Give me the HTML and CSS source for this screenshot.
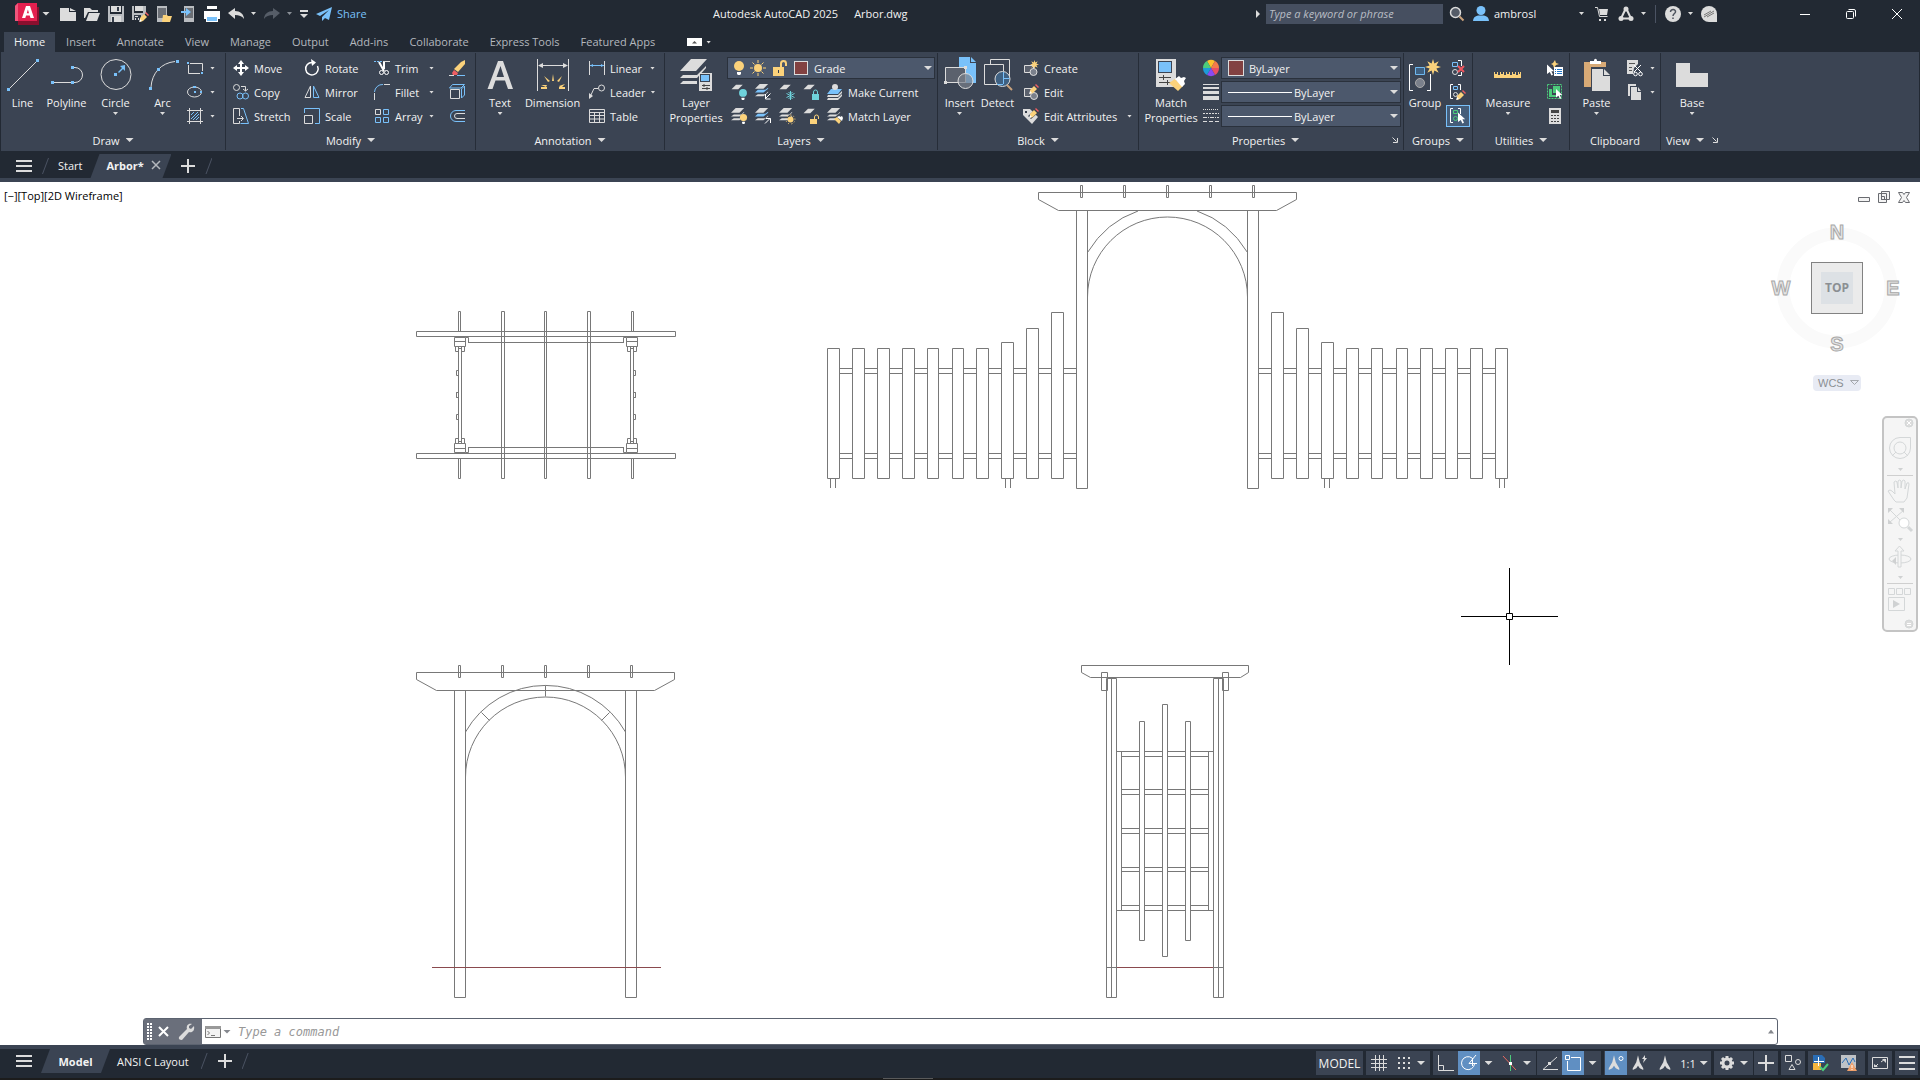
FILE: index.html
```
<!DOCTYPE html>
<html lang="en">
  <head>
    <meta charset="UTF-8" />
    <meta name="viewport" content="width=device-width, initial-scale=1.0" />
    <title>Autodesk AutoCAD 2025 - Arbor.dwg</title>
    <link rel="stylesheet" href="styles.css" />
  </head>

  <body>
    <!-- shapes used more than once -->
    <svg class="defs" aria-hidden="true">
      <symbol id="sheet" viewBox="0 0 16 16">
        <path class="fl" d="M6 1h9l-6 6H0z" />
      </symbol>
      <symbol id="sheets" viewBox="0 0 16 16">
        <path class="fl" d="M5 0h9L9 5H0zM3 7h8l3-3v1L9 9H0zM3 11h8l3-3v1l-5 4H0z" />
      </symbol>
      <symbol id="sheets-blue" viewBox="0 0 16 16">
        <path class="fl" d="M5 0h9L9 5H0zM3 11h8l3-3v1l-5 4H0z" />
        <path class="fb" d="M3 6h8l3-2v1L9 9H0z" />
      </symbol>
      <symbol id="bulb" viewBox="0 0 10 14">
        <circle cx="5" cy="5" r="5" />
        <path class="fw" d="M3 11h4v2l-1 1H4l-1-1z" />
      </symbol>
      <symbol id="star" viewBox="0 0 16 16">
        <path class="fy" d="M8 0l1.400 4.600L13.700 2.300 11.400 6.600 16 8l-4.600 1.400 2.300 4.300-4.300-2.300L8 16l-1.400-4.600-4.300 2.300 2.300-4.300L0 8l4.600-1.400-2.300-4.300 4.300 2.300z" />
      </symbol>
      <symbol id="pencil" viewBox="0 0 10 10">
        <path class="fy" d="M1 6l4-4 3 3-4 4-3 1z" />
        <path class="fr" d="M6 1l1-1 3 3-1 1z" />
        <path class="fw" d="M0 10l1-3 2 2z" />
      </symbol>
      <symbol id="pointer" viewBox="0 0 10 14">
        <path class="fw" d="M0 0l9 8.500H5.500l2 4.500-2 1-2-4.500L0 12z" />
      </symbol>
      <symbol id="menu" viewBox="0 0 16 12">
        <path class="fl" d="M0 0h16v2H0zM0 5h16v2H0zM0 10h16v2H0z" />
      </symbol>
      <symbol id="plus" viewBox="0 0 14 14">
        <path class="fl" d="M6 0h2v6h6v2H8v6H6V8H0V6h6z" />
      </symbol>
      <symbol id="launcher" viewBox="0 0 6 6">
        <path class="sl" d="M.5.5l4 4M5.500 1v4.500H1" />
      </symbol>
      <symbol id="annot" viewBox="0 0 16 18">
        <path class="fl" d="M8 0l2 8 4 7v2l-4-2-2-3-2 3-4 2v-2l4-7z" />
      </symbol>
    </svg>

    <header class="titlebar">
      <div class="quick-access">
        <button class="app-button" aria-label="Application menu">
          <svg width="24" height="22" viewBox="0 0 24 22">
            <path fill="#8a0f2e" d="M3 4h21v18H3z" />
            <path fill="#e3204f" d="M3 0h19v18H0V3z" />
            <path fill="#f0567c" d="M3 0v18H0V3z" />
            <path class="fw" d="M11 3h4l4 12h-3.500l-.8-2.600h-3.600L10.300 15H7zm1.900 3.500l-1.100 3.700h2.200z" />
          </svg>
          <i class="caret wide"></i>
        </button>
        <button aria-label="New"><svg class="ico" viewBox="0 0 16 16"><path class="fl" d="M0 2h9v4h7v9H0zM10 2l6 3h-6z" /></svg></button>
        <button aria-label="Open"><svg class="ico" viewBox="0 0 16 16"><path class="fl" d="M0 2h6l2 2h6v2H4l-3 6H0z" /><path class="fl" d="M5 7h11l-3 8H2z" /></svg></button>
        <button aria-label="Save"><svg class="ico" viewBox="0 0 16 16"><path fill="#b9bcc0" d="M0 0h2v8h12V0h2v16H0z" /><path class="fl" d="M3 0h10v6H3zM3 10h10v6H3z" /><path class="fd" d="M4 11h2v5H4zM9 1h2v4H9z" /></svg></button>
        <button aria-label="Save as"><svg class="ico" viewBox="0 0 16 16"><path fill="#b9bcc0" d="M0 0h2v7h9V0h3v7l-6 7H0z" /><path class="fl" d="M3 0h8v5H3z" /><path class="fd" d="M2 9h7v5H2z" /><path class="fl" d="M3 10h3v1H3zM3 12h1v2H3zM6 12h1v2H6z" /><use href="#pencil" x="7" y="6" width="10" height="10" /></svg></button>
        <button aria-label="Open from mobile"><svg class="ico" viewBox="0 0 16 16"><path fill="#b9bcc0" d="M1 0h10v16H1z" /><path fill="#6b6f76" d="M2 2h8v10H2z" /><path class="fy" d="M7 9h4l1 1h4l-2 6H6z" /></svg></button>
        <button aria-label="Save to mobile"><svg class="ico" viewBox="0 0 16 16"><path fill="#b9bcc0" d="M4 0h10v16H4z" /><path fill="#6b6f76" d="M5 2h8v10H5z" /><path class="fb" d="M1 5h5V2l5 4-5 4V7H1z" /></svg></button>
        <button aria-label="Plot"><svg class="ico" viewBox="0 0 16 16"><path class="fw" d="M3 0h10v3H3zM0 5h16v8h-2v-3H2v3H0z" /><path class="fw" d="M2 10h12v6H2z" /><path class="fb" d="M3 11h10v4H3z" /></svg></button>
        <button class="split" aria-label="Undo"><svg class="ico" viewBox="0 0 16 16"><path class="fl" d="M0 7l7-5v3c5 0 9 3 9 8-2-3-5-4-9-4v4z" /></svg><i class="caret"></i></button>
        <button class="split off" aria-label="Redo"><svg class="ico" viewBox="0 0 16 16"><path fill="#565d68" d="M16 7L9 2v3c-5 0-9 3-9 8 2-3 5-4 9-4v4z" /></svg><i class="caret"></i></button>
        <button class="customize" aria-label="Customize"><svg width="8" height="8" viewBox="0 0 8 8"><path class="fl" d="M0 0h8v2H0zM0 4h8L4 8z" /></svg></button>
        <button class="share"><svg width="16" height="14" viewBox="0 0 16 14"><path class="fb" d="M16 0L0 7l4 2 9-6-7 7v4l3-3 4 2z" /></svg>Share</button>
      </div>
      <div class="title"><span>Autodesk AutoCAD 2025</span><span>Arbor.dwg</span></div>
      <div class="infocenter">
        <svg width="4" height="8" viewBox="0 0 4 8"><path class="fl" d="M0 0l4 4-4 4z" /></svg>
        <input class="search" type="text" placeholder="Type a keyword or phrase" aria-label="Search" />
        <button aria-label="Find"><svg class="ico" viewBox="0 0 16 16"><circle cx="6.500" cy="6.500" r="5" fill="#555c68" stroke="#dcdcdc" stroke-width="1.500" /><path d="M10.500 10.500l4 4" stroke="#c9a27c" stroke-width="2" /></svg></button>
        <button class="user"><svg class="ico" viewBox="0 0 16 16"><circle class="fb" cx="8" cy="4.500" r="4.500" /><path class="fb" d="M0 15c0-3 2-5 5-5.500h6c3 .5 5 2.500 5 5.500z" /></svg>ambrosl<i class="caret"></i></button>
        <button class="cart" aria-label="App store"><svg class="ico" viewBox="0 0 16 16"><path class="sl" d="M1 1.500h2.500l2 9h8" /><path class="fl" d="M5 3h9l-1 6H6zM5 13h2v2H5zM10 13h2v2h-2z" /></svg></button>
        <button class="split" aria-label="Autodesk app"><svg class="ico" viewBox="0 0 16 16"><path d="M8 2L3 12.500M8 2l5 10.500M3 12.500h10" stroke="#dcdcdc" stroke-width="2" fill="none" /><circle class="fl" cx="8" cy="3" r="2.500" /><circle class="fl" cx="3" cy="12.500" r="2.500" /><circle class="fl" cx="13" cy="12.500" r="2.500" /></svg><i class="caret"></i></button>
        <span class="divider"></span>
        <button class="split" aria-label="Help"><svg class="ico" viewBox="0 0 16 16"><circle class="fl" cx="8" cy="8" r="8" /><path d="M5.500 6C5.500 2.500 11 3 10.500 6 10.300 7.500 8 7.800 8 10M8 11.500v1.500" fill="none" stroke="#4d535d" stroke-width="1.500" /></svg><i class="caret"></i></button>
        <button class="feedback" aria-label="Feedback"><svg class="ico" viewBox="0 0 16 16"><path class="fl" d="M8 0a8 8 0 0 1 8 8v8H8A8 8 0 0 1 8 0z" /><path d="M3 9l7-4M3 11l10-6M6 11l7-4" stroke="#777" fill="none" /></svg></button>
      </div>
      <div class="window-buttons">
        <button aria-label="Minimize"><svg width="10" height="10" viewBox="0 0 10 10"><path class="sw" d="M0 5.500h10" /></svg></button>
        <button aria-label="Restore"><svg width="10" height="10" viewBox="0 0 10 10"><rect class="sw" x=".5" y="2.500" width="7" height="7" rx="1" /><path class="sw" d="M2.500.5H8A1.500 1.500 0 0 1 9.500 2v5.500" /></svg></button>
        <button aria-label="Close"><svg width="10" height="10" viewBox="0 0 10 10"><path class="sw" d="M0 0l10 10M10 0L0 10" /></svg></button>
      </div>
    </header>

    <nav class="ribbon-tabs">
      <a class="active" href="#home">Home</a>
      <a href="#insert">Insert</a>
      <a href="#annotate">Annotate</a>
      <a href="#view">View</a>
      <a href="#manage">Manage</a>
      <a href="#output">Output</a>
      <a href="#addins">Add-ins</a>
      <a href="#collaborate">Collaborate</a>
      <a href="#express">Express Tools</a>
      <a href="#featured">Featured Apps</a>
      <button aria-label="Minimize ribbon"><svg width="15" height="8" viewBox="0 0 15 8"><path class="fw" d="M0 0h15v8H0z" /><path fill="#555" d="M5 5.500L7.500 3 10 5.500z" /></svg><i class="caret"></i></button>
    </nav>

    <main class="ribbon" id="home">
      <section class="panel draw">
        <div class="panel-body">
          <button class="big"><svg viewBox="0 0 32 32"><path class="sl" d="M2 30L30 2" /><path class="fb" d="M0 29h3v3H0zM29 0h3v3h-3z" /></svg>Line</button>
          <button class="big"><svg viewBox="0 0 32 32"><path class="sl" d="M2 23.500h20M22 8.500h2a7.500 7.500 0 0 1 0 15h-2" /><path class="fb" d="M0 22h3v3H0zM20 22h3v3h-3zM20 7h3v3h-3z" /></svg>Polyline</button>
          <button class="big"><svg viewBox="0 0 32 32"><circle class="sl" cx="16" cy="15.500" r="15" /><path class="fb" d="M14 14h3v3h-3zM25 6v6l-2-2-4 4-1-1 4-4-2-2z" /></svg>Circle<i class="caret"></i></button>
          <button class="big"><svg viewBox="0 0 32 32"><path class="sl" d="M4 28C5 14 14 4 28 2.500" /><path class="fb" d="M2 28h3v3H2zM10 9h3v3h-3zM29 1h3v3h-3z" /></svg>Arc<i class="caret"></i></button>
          <div class="stack">
            <button class="tool" aria-label="Rectangle"><svg class="ico" viewBox="0 0 16 16"><path class="sl" d="M3 3.500h12.500V11M1.500 5v8.500H13" /><path class="fb" d="M0 2h2v2H0zM14 12h2v2h-2z" /></svg><i class="caret"></i></button>
            <button class="tool" aria-label="Ellipse"><svg class="ico" viewBox="0 0 16 16"><ellipse class="sl" cx="7.500" cy="8" rx="7" ry="5" /><path class="fb" d="M7 7h2v2H7zM6 2h3v2H6zM13 7h2v2h-2z" /></svg><i class="caret"></i></button>
            <button class="tool" aria-label="Hatch"><svg class="ico" viewBox="0 0 16 16"><path class="sl" d="M0 2.500h16M0 13.500h16M2.500 0v16M13.500 0v16" /><path class="sb" d="M4 7l3-3M4 11l7-7M6 12l6-6M9 12l3-3" /></svg><i class="caret"></i></button>
          </div>
        </div>
        <div class="panel-title"><button>Draw<i class="caret wide"></i></button></div>
      </section>

      <section class="panel modify">
        <div class="panel-body">
          <div class="stack">
            <button class="tool"><svg class="ico" viewBox="0 0 16 16"><path class="fw" d="M8 0l3 4H9v3h3V5l4 3-4 3V9H9v3h2l-3 4-3-4h2V9H4v2L0 8l4-3v2h3V4H5z" /></svg>Move</button>
            <button class="tool"><svg class="ico" viewBox="0 0 16 16"><circle class="sl" cx="3.500" cy="3.500" r="3" /><path class="sl" d="M8 2.500h4.500V7M10 5l2.500 2L15 5" /><circle class="sb" cx="7" cy="12" r="3" /><circle class="sb" cx="12.500" cy="12" r="3" /></svg>Copy</button>
            <button class="tool"><svg class="ico" viewBox="0 0 16 16"><path class="sl" d="M6.500 8V.5h-6v15h6V13M4 10.500h6M8 8l2.500 2.500L8 13" /><path class="sb" d="M8 .5h2.500l5 15H7.500" /></svg>Stretch</button>
          </div>
          <div class="stack">
            <button class="tool"><svg class="ico" viewBox="0 0 16 16"><path d="M8 2.500A6.200 6.200 0 1 0 13.500 6" fill="none" stroke="#fff" stroke-width="1.500" /><path class="fw" d="M7-1l5 3.500L8 6z" /></svg>Rotate</button>
            <button class="tool"><svg class="ico" viewBox="0 0 16 16"><path class="sl" d="M6.500 2v11.500H1z" /><path class="sb" d="M9.500 2v11.500H15z" /></svg>Mirror</button>
            <button class="tool"><svg class="ico" viewBox="0 0 16 16"><path class="sb" d="M.5 5V.5h15v15H11" /><path class="sl" d="M.5 7.500h8v8h-8z" /></svg>Scale</button>
          </div>
          <div class="stack">
            <button class="tool"><svg class="ico" viewBox="0 0 16 16"><path class="sb" stroke-dasharray="2 1" d="M0 1.500h8" /><path class="sl" d="M9 1.500h7" /><path d="M5 2l5 9M10 2v7" stroke="#fff" stroke-width="2" /><circle class="sw" cx="7.500" cy="12.500" r="2" /><circle class="sw" cx="12.500" cy="12.500" r="2" /></svg>Trim<i class="caret"></i></button>
            <button class="tool"><svg class="ico" viewBox="0 0 16 16"><path class="sb" d="M.5 8A8 8 0 0 1 9 .5" /><path class="sl" d="M.5 9v7M10 .5h6" /></svg>Fillet<i class="caret"></i></button>
            <button class="tool"><svg class="ico" viewBox="0 0 16 16"><path class="sl" d="M1.500 1.500h5v5h-5z" /><path class="sb" d="M9.500 1.500h5v5h-5zM1.500 9.500h5v5h-5zM9.500 9.500h5v5h-5z" /></svg>Array<i class="caret"></i></button>
          </div>
          <div class="stack extra">
            <button class="tool" aria-label="Erase"><svg class="ico" viewBox="0 0 16 16"><path class="fy" d="M12 2l4-2v4l-7 8-4-3z" /><path class="fr" d="M5 10l4 3-1 2H4l-1-2z" /><path class="sl" d="M0 15.500h5" /><path class="sb" d="M8 15.500h8" /></svg></button>
            <button class="tool" aria-label="Explode"><svg class="ico" viewBox="0 0 16 16"><path class="sl" d="M1.500 5.500h9v9h-9z" /><path class="sb" d="M.5 4l3-3.500h12L12 4zM12.500 14l3-3V2l-3 3z" /></svg></button>
            <button class="tool" aria-label="Offset"><svg class="ico" viewBox="0 0 16 16"><path class="sb" d="M16 2.500H7a5.500 5.500 0 0 0 0 11h9" /><path class="sl" d="M16 5.500H8a2.500 2.500 0 0 0 0 5h8" /></svg></button>
          </div>
        </div>
        <div class="panel-title"><button>Modify<i class="caret wide"></i></button></div>
      </section>

      <section class="panel annotation">
        <div class="panel-body">
          <button class="big"><svg viewBox="0 0 32 32"><path class="fl" d="M14 2h5l10 28h-5l-3-8.500H11.500L8.500 30H3.500zm2.500 5l-4 11h7.500z" /></svg>Text<i class="caret"></i></button>
          <button class="big"><svg viewBox="0 0 32 32"><path class="sl" d="M.5 0v32M31.500 0v32M2 6.500h28" /><path class="fl" d="M1 6.500L6 4v5zM31 6.500L26 4v5z" /><path class="fy" d="M15 22l1-7 1 7zM11 23l-4-6 6 5zM20 22l5-5-3 6zM9 28l-5-2 6 0zM22 27l6-2-4 4zM4 28h6v2H4zM22 28h6v2h-6z" /></svg>Dimension</button>
          <div class="stack">
            <button class="tool"><svg class="ico" viewBox="0 0 16 16"><path class="sl" d="M.5 1v14M15.500 1v14" /><path class="sb" d="M1 5.500h14" /><path class="fb" d="M1 5.500L4 4v3zM15 5.500L12 4v3z" /></svg>Linear<i class="caret"></i></button>
            <button class="tool"><svg class="ico" viewBox="0 0 16 16"><circle class="sl" cx="12.500" cy="4" r="3" /><path class="sl" d="M9 4.500H5L1 13" /><path class="fl" d="M0 15V9l4 3z" /></svg>Leader<i class="caret"></i></button>
            <button class="tool"><svg class="ico" viewBox="0 0 16 16"><path class="sl" d="M.5 1.500h15v13H.5zM0 4.500h16M0 7.500h16M0 11h16M5.500 4v10M10.500 4v10" /></svg>Table</button>
          </div>
        </div>
        <div class="panel-title"><button>Annotation<i class="caret wide"></i></button></div>
      </section>

      <section class="panel layers">
        <div class="panel-body">
          <button class="big"><svg viewBox="0 0 32 32"><path class="fl" d="M11 0h16L16 12H0zM3 16h14l9-9v2l-9 10H0zM3 22h14v3H0z" /><path class="fl" d="M19 14h13v18H19z" /><path fill="#3b4453" d="M20 15h10v8H20z" /><path class="fb" d="M21 16h8v6h-8z" /><path d="M22 26.500h8M22 29.500h8M24 25v3M27 28v3" stroke="#444" /></svg>Layer<br />Properties</button>
          <div class="stack">
            <label class="combo">
              <svg width="10" height="14" class="fy"><use href="#bulb" /></svg>
              <svg class="ico" viewBox="0 0 16 16"><circle class="fy" cx="8" cy="8" r="4" /><path class="sy" d="M8 0v3M8 13v3M0 8h3M13 8h3M2.500 2.500l2 2M11.500 11.500l2 2M2.500 13.500l2-2M11.500 4.500l2-2" /></svg>
              <svg class="ico" viewBox="0 0 16 16"><path d="M9 7V3.500a2.500 2.500 0 0 1 5 0V6" fill="none" stroke="#fbd27b" stroke-width="2" /><path class="fy" d="M1 7h11v9H1z" /><path class="fd" d="M6 10h1v3H6z" /></svg>
              <span class="swatch"></span>
              <select aria-label="Layer"><option>Grade</option></select>
              <i class="caret wide"></i>
            </label>
            <div class="row">
              <button class="tool" aria-label="Off"><svg class="ico" viewBox="0 0 16 16"><use href="#sheet" y="0" width="13" height="12" /><use class="fc" href="#bulb" x="8" y="5" width="8" height="11" /></svg></button>
              <button class="tool" aria-label="Isolate"><svg class="ico" viewBox="0 0 16 16"><use href="#sheets-blue" width="15" height="15" /><path class="sw" d="M15.500 9.500l-5 5M10.500 10v5h5" /></svg></button>
              <button class="tool" aria-label="Freeze"><svg class="ico" viewBox="0 0 16 16"><use href="#sheet" width="13" height="12" /><path d="M11.500 7v9M7.500 9.500l8 4M15.500 9.500l-8 4M9.500 8l2 2 2-2M9.500 15l2-2 2 2" stroke="#6fd3dc" fill="none" /></svg></button>
              <button class="tool" aria-label="Lock"><svg class="ico" viewBox="0 0 16 16"><use href="#sheet" width="13" height="12" /><path class="fc" d="M9 10h7v6H9z" /><path d="M10.500 10V8a2 2 0 0 1 4 0v2" stroke="#6fd3dc" fill="none" /></svg></button>
              <button class="tool"><svg class="ico" viewBox="0 0 16 16"><path class="fb" d="M4 5h11l-4 5H0z" /><path class="fl" d="M1 11h10l4-4v2l-4 4H0zM1 14h10l4-4v2l-4 4H0z" /><circle class="fl" cx="8" cy="3" r="3" /></svg>Make Current</button>
            </div>
            <div class="row">
              <button class="tool" aria-label="Turn all on"><svg class="ico" viewBox="0 0 16 16"><use href="#sheets" width="15" height="15" /><use class="fy" href="#bulb" x="8" y="6" width="9" height="10" /></svg></button>
              <button class="tool" aria-label="Unisolate"><svg class="ico" viewBox="0 0 16 16"><use href="#sheets-blue" width="15" height="15" /><path class="sw" d="M10 15.500l5-5M11 10.500h4.500V15" /></svg></button>
              <button class="tool" aria-label="Thaw all"><svg class="ico" viewBox="0 0 16 16"><use href="#sheets" width="15" height="15" /><circle class="fy" cx="11.500" cy="11.500" r="3" /><path class="sy" stroke-dasharray="1 2" d="M11.500 7a4.500 4.500 0 1 1-.1 0" /></svg></button>
              <button class="tool" aria-label="Unlock"><svg class="ico" viewBox="0 0 16 16"><use href="#sheet" width="13" height="12" /><path class="fy" d="M7 11h7v5H7z" /><path class="sy" d="M11.500 11V9a2 2 0 0 1 4 0v2" /></svg></button>
              <button class="tool"><svg class="ico" viewBox="0 0 16 16"><use href="#sheets" width="15" height="15" /><path class="fy" d="M7 11l3-2 4 4-2 3z" /><path class="fw" d="M10 9l2-1 1 1 2-1 1 2-1 3z" /></svg>Match Layer</button>
            </div>
          </div>
        </div>
        <div class="panel-title"><button>Layers<i class="caret wide"></i></button></div>
      </section>

      <section class="panel block">
        <div class="panel-body">
          <button class="big"><svg viewBox="0 0 32 32"><path class="fb" d="M15-2h11v6h6v20H15z" /><path class="fb" d="M27-2l5 5h-5z" /><path d="M1.500 8.500h20v15h-20z" fill="#5b616d" stroke="#dcdcdc" /><path class="fl" d="M0 22h3v3H0zM20 7h3v3h-3z" /><circle cx="21.500" cy="22" r="7.500" fill="#7a808b" fill-opacity=".7" stroke="#dcdcdc" /></svg>Insert<i class="caret"></i></button>
          <button class="big"><svg viewBox="0 0 32 32"><path d="M8.500 5V.5h19V20" class="sl" /><path class="sl" d="M16 25.500H2.500v-20h19V12" /><circle cx="20.500" cy="20" r="7.500" fill="#3f6182" stroke="#dcdcdc" /><path class="sb" d="M21.500 13v12M21.500 19.500h6M15 25.500h6" /><path d="M25 26l5 5" stroke="#c9a27c" stroke-width="2" /></svg>Detect</button>
          <div class="stack">
            <button class="tool"><svg class="ico" viewBox="0 0 16 16"><path d="M1.500 5.500h9v7h-9z" fill="#5b616d" stroke="#dcdcdc" /><circle cx="10.500" cy="12" r="3.500" fill="#7a808b" stroke="#dcdcdc" /><use href="#star" x="7" y="0" width="9" height="9" /></svg>Create</button>
            <button class="tool"><svg class="ico" viewBox="0 0 16 16"><path d="M1.500 4.500h9v8h-9z" fill="#5b616d" stroke="#dcdcdc" /><circle cx="11" cy="12" r="3.500" fill="#7a808b" stroke="#dcdcdc" /><use href="#pencil" x="6" y="0" width="10" height="10" /></svg>Edit</button>
            <button class="tool"><svg class="ico" viewBox="0 0 16 16"><path class="fl" d="M0 1h7l8 8-6 7-9-9z" /><path class="fd" d="M2 3h2v2H2z" /><path class="fd" d="M5 8l9-8 2 4-8 7z" /><use href="#pencil" x="6" y="0" width="10" height="10" /></svg>Edit Attributes<i class="caret"></i></button>
          </div>
        </div>
        <div class="panel-title"><button>Block<i class="caret wide"></i></button></div>
      </section>

      <section class="panel properties">
        <div class="panel-body">
          <button class="big"><svg viewBox="0 0 32 32"><path class="fl" d="M1 0h20v28H1z" /><path fill="#3b4453" d="M3 2h14v12H3z" /><path class="fb" d="M4 3h12v10H4z" /><path d="M4 18.500h12M4 23.500h12M8.500 16v5M12.500 21v5" stroke="#444" fill="none" /><path class="fy" d="M14 24l6-4 8 7-5 5z" /><path class="fw" d="M20 20l4-3 2 2 3-1 2 1-2 3 1 3-3 3z" /></svg>Match<br />Properties</button>
          <div class="prop-grid">
            <svg class="ico wheel" viewBox="0 0 16 16"><path fill="#fbc02d" d="M8 8L4 1a8 8 0 0 1 8 0z" /><path fill="#f37b4b" d="M8 8l4-7a8 8 0 0 1 4 7z" /><path fill="#e94f64" d="M8 8h8a8 8 0 0 1-4 7z" /><path fill="#8a4af3" d="M8 8l4 7a8 8 0 0 1-8 0z" /><path fill="#1e9bd7" d="M8 8l-4 7a8 8 0 0 1-4-7z" /><path fill="#4ccb7b" d="M8 8H0a8 8 0 0 1 4-7z" /></svg>
            <label class="combo color"><span class="swatch"></span><select aria-label="Object color"><option>ByLayer</option></select><i class="caret wide"></i></label>
            <svg class="ico" viewBox="0 0 16 16"><path class="fl" d="M0 0h16v1H0zM0 3h16v2H0zM0 7h16v3H0zM0 12h16v4H0z" /></svg>
            <label class="combo line"><span class="rule"></span><select aria-label="Lineweight"><option>ByLayer</option></select><i class="caret wide"></i></label>
            <svg class="ico" viewBox="0 0 16 16"><path class="sl" stroke-dasharray="1 1" d="M0 1.500h16" /><path class="sl" stroke-dasharray="2 1" d="M0 5.500h16" /><path class="sl" stroke-dasharray="4 1 1 1" d="M0 9.500h16" /><path class="sl" stroke-dasharray="4 2" d="M0 13.500h16" /></svg>
            <label class="combo line"><span class="rule"></span><select aria-label="Linetype"><option>ByLayer</option></select><i class="caret wide"></i></label>
          </div>
        </div>
        <div class="panel-title"><button>Properties<i class="caret wide"></i></button><button class="launch" aria-label="Properties palette"><svg width="6" height="6"><use href="#launcher" /></svg></button></div>
      </section>

      <section class="panel groups">
        <div class="panel-body">
          <button class="big"><svg viewBox="0 0 32 32"><path class="sw" d="M4 5.500H.5v26H4M18 31.500h3.500V15" /><path fill="#3f6182" stroke="#6fb9f0" d="M6.500 8.500h9v7h-9z" /><circle cx="11" cy="24" r="4.500" fill="#7a808b" stroke="#aaa" /><use href="#star" x="16" y="0" width="16" height="16" /></svg>Group</button>
          <div class="stack">
            <button class="tool" aria-label="Ungroup"><svg class="ico" viewBox="0 0 16 16"><path class="sb" d="M2.500 2.500h5v4h-5z" /><circle class="sl" cx="5" cy="12" r="2.500" /><path class="sw" d="M8 .5h3.500V6M11.500 12v3.500H8" /><path d="M8 6l6 6M14 6l-6 6" stroke="#f0565f" stroke-width="2" /></svg></button>
            <button class="tool" aria-label="Group edit"><svg class="ico" viewBox="0 0 16 16"><path class="sw" d="M3 .5H.5v14H3M8 .5h2.500V6" /><path class="sb" d="M3.500 2.500h4v3h-4z" /><circle class="sl" cx="5.500" cy="10.500" r="2" /><use href="#pencil" x="6" y="6" width="10" height="10" /></svg></button>
            <button class="tool pressed" aria-label="Group selection"><svg class="ico" viewBox="0 0 16 16"><path class="sw" d="M3 .5H.5v14H3M8 .5h2.500V6" /><path d="M3.500 2.500h4v3h-4z" stroke="#4ccb7b" fill="none" /><circle cx="5.500" cy="10.500" r="2" stroke="#4ccb7b" fill="none" /><use href="#pointer" x="8" y="4" width="8" height="12" /></svg></button>
          </div>
        </div>
        <div class="panel-title"><button>Groups<i class="caret wide"></i></button></div>
      </section>

      <section class="panel utilities">
        <div class="panel-body">
          <button class="big"><svg viewBox="0 0 32 32"><path class="fy" d="M2 13h1v2h2v-2h1v3h2v-3h1v2h2v-2h1v3h2v-3h1v2h2v-2h1v3h2v-3h1v2h2v-2h1v3h2v-3h1v2h1v-2h1v6H2z" /></svg>Measure<i class="caret"></i></button>
          <div class="stack">
            <button class="tool" aria-label="Quick select"><svg class="ico" viewBox="0 0 16 16"><use href="#pointer" x="0" y="4" width="8" height="12" /><path class="fy" d="M8 0l1 3 3 1-3 1-2 3-1-3-2-1 2-1z" /><path class="fw" d="M7 7h9v9H7z" /><path d="M8 9.500h1M10 9.500h5M8 11.500h1M10 11.500h5M8 13.500h1M10 13.500h5" stroke="#2176c7" /></svg></button>
            <button class="tool" aria-label="Select all"><svg class="ico" viewBox="0 0 16 16"><path d="M.5.5h14v14H.5z" fill="none" stroke="#4ccb7b" stroke-dasharray="2 1" /><path fill="#4ccb7b" d="M2 5h3v6h5v2H2zM6 2h7v7H6z" /><use href="#pointer" x="9" y="4" width="7" height="12" /></svg></button>
            <button class="tool" aria-label="Quick calculator"><svg class="ico" viewBox="0 0 16 16"><path class="fl" d="M2 0h12v16H2z" /><path fill="#444" d="M4 2h8v3H4zM4 7h2v1H4zM7 7h2v1H7zM10 7h2v1h-2zM4 10h2v1H4zM7 10h2v1H7zM10 10h2v1h-2zM4 13h2v1H4zM7 13h2v1H7zM10 13h2v1h-2z" /></svg></button>
          </div>
        </div>
        <div class="panel-title"><button>Utilities<i class="caret wide"></i></button></div>
      </section>

      <section class="panel clipboard">
        <div class="panel-body">
          <button class="big"><svg viewBox="0 0 32 32"><path fill="#d8aa76" d="M3 3h22v25H3z" /><path class="fw" d="M9 2h4c0-3 3-3 3 0h4v3H9z" /><path fill="#3b4453" d="M10 8h15v1h4v23H10z" /><path class="fl" d="M11 10h11v7h7v15H11z" /><path class="fl" d="M23 10l6 6h-6z" /></svg>Paste<i class="caret"></i></button>
          <div class="stack">
            <button class="tool" aria-label="Cut"><svg class="ico" viewBox="0 0 16 16"><path class="fl" d="M0 0h11v4l-4 4-1 6H0z" /><path d="M2 3.500h6M2 7.500h3M2 10.500h3" stroke="#555" /><path class="sw" d="M7 5l7 7M14 5l-7 7" /><circle class="sw" cx="8.500" cy="14" r="1.800" /><circle class="sw" cx="13.500" cy="14" r="1.800" /></svg><i class="caret"></i></button>
            <button class="tool" aria-label="Copy clip"><svg class="ico" viewBox="0 0 16 16"><path class="fl" d="M1 0h8v2H3v10H1z" /><path class="fl" d="M4 3h6v5h4v8H4zM11 3l3 4h-3z" /></svg><i class="caret"></i></button>
          </div>
        </div>
        <div class="panel-title"><span>Clipboard</span></div>
      </section>

      <section class="panel view">
        <div class="panel-body">
          <button class="big"><svg viewBox="0 0 32 32"><path class="fl" d="M0 4h14v10h18v14H0z" /></svg>Base<i class="caret"></i></button>
        </div>
        <div class="panel-title"><button>View<i class="caret wide"></i></button><button class="launch" aria-label="View settings"><svg width="6" height="6"><use href="#launcher" /></svg></button></div>
      </section>
    </main>

    <nav class="file-tabs">
      <button class="hamburger" aria-label="File menu"><svg width="16" height="12"><use href="#menu" /></svg></button>
      <span class="slash"></span>
      <a href="#start">Start</a>
      <a class="current" href="#arbor">Arbor*<svg width="8" height="8" viewBox="0 0 8 8"><path d="M0 0l8 8M8 0L0 8" stroke="#b4b8be" stroke-width="1.500" /></svg></a>
      <button class="add" aria-label="New drawing"><svg width="14" height="14"><use href="#plus" /></svg></button>
      <span class="slash"></span>
    </nav>

    <div class="canvas">
      <svg class="drawing" viewBox="0 182 1920 863" preserveAspectRatio="xMidYMid meet">
        <defs>
          <!-- roof beam with its five rafter ends, and the inner arch -->
          <g id="arbor-top">
            <path d="M1038.500 192.500h258v7l-20 11h-218l-20-11z" />
            <path d="M1080.500 185.500h2v12h-2zM1123.500 185.500h2v12h-2zM1166.500 185.500h2v12h-2zM1209.500 185.500h2v12h-2zM1252.500 185.500h2v12h-2z" />
            <path d="M1087.500 297a80 80 0 0 1 160 0" />
          </g>
          <g id="fence">
            <path d="M839 368.500h237M839 373.500h237M839 453.500h237M839 458.500h237" />
            <path d="M830.500 478v10M835.500 478v10M1005.500 478v10M1010.500 478v10" />
            <g class="boards">
              <path d="M827.500 348.500h12v130h-12zM852.500 348.500h12v130h-12zM877.500 348.500h12v130h-12zM902.500 348.500h12v130h-12zM927.500 348.500h11v130h-11zM952.500 348.500h11v130h-11zM976.500 348.500h12v130h-12z" />
              <path d="M1001.500 342.500h12v136h-12zM1026.500 328.500h12v150h-12zM1051.500 312.500h12v166h-12z" />
            </g>
            <path d="M1076.500 211v277.500h11V211" />
            <path d="M1087.500 252.500Q1106 222 1138 211" />
          </g>
          <g id="plan-half">
            <path d="M416.500 331.500H546M546 336.500H416.500v-5M454.500 337.500h11v9h-11zM454.500 341.500h11M465.500 337.500h3v5.500M468 342.500h78" />
            <path d="M455.500 346.500h3v5h-3zM461.500 346.500h3v5h-3zM458.500 311.500h2v20h-2zM458.500 395v-46.500h3V395" />
            <path d="M456.500 370.500h2v5h-2zM456.500 392.500h2v5h-2z" />
          </g>
        </defs>

        <!-- plan -->
        <use href="#plan-half" />
        <use href="#plan-half" transform="translate(1092 0) scale(-1 1)" />
        <use href="#plan-half" transform="translate(0 790) scale(1 -1)" />
        <use href="#plan-half" transform="translate(1092 790) scale(-1 -1)" />
        <path d="M501.500 311.500h3v167h-3zM544.500 311.500h2v167h-2zM587.500 311.500h3v167h-3z" />

        <!-- front with fence -->
        <use href="#arbor-top" />
        <use href="#fence" />
        <use href="#fence" transform="translate(2335 0) scale(-1 1)" />

        <!-- front -->
        <use href="#arbor-top" transform="translate(-622 480)" />
        <path d="M454.500 690v307.500h11V690M625.500 690v307.500h11V690" />
        <path d="M465.500 732a92 92 0 0 1 160 0M545.500 685.500v11M481.500 712.500l8 8M609.500 712.500l-8 8" />
        <path class="ground" d="M432 967.500h229" />

        <!-- side -->
        <path d="M1081.500 665.500h167v7l-8 5h-150l-9-5z" />
        <path d="M1101.500 672.500h6v18h-6zM1222.500 672.500h6v18h-6z" />
        <path d="M1106.500 678.500h10v319h-10zM1111.500 678.500v319M1213.500 678.500h10v319h-10zM1218.500 678.500v319" />
        <path d="M1116.500 751.500h97M1121.500 756.500h87M1121.500 789.500h87M1121.500 794.500h87M1121.500 828.500h87M1121.500 833.500h87M1121.500 867.500h87M1121.500 871.500h87M1121.500 905.500h87M1116.500 910.500h97M1121.500 751v159M1208.500 751v159" />
        <g class="boards">
          <path d="M1139.500 721.500h5v219h-5zM1162.500 704.500h5v252h-5zM1185.500 721.500h5v219h-5z" />
        </g>
        <path d="M1106 967.500h11M1213 967.500h11" />
        <path class="ground" d="M1117 967.500h96" />

        <path class="cursor" d="M1461 616.500h45M1513 616.500h45M1509.500 568v45M1509.500 620v45M1506.500 613.500h6v6h-6z" />
      </svg>

      <div class="view-label">[&minus;][Top][2D Wireframe]</div>

      <div class="view-buttons">
        <button aria-label="Minimize view"><svg width="14" height="14" viewBox="0 0 14 14"><path class="vb" d="M1.500 7.500h11v4h-11z" /></svg></button>
        <button aria-label="Restore view"><svg width="14" height="14" viewBox="0 0 14 14"><path class="vb" d="M4.500 1.500h8v8h-8zM1.500 3.500h8v9h-8zM4.500 6.500h3v3h-3z" /></svg></button>
        <button aria-label="Close view"><svg width="14" height="14" viewBox="0 0 14 14"><path class="vb" d="M1.500 2.500h4l1.500 2 1.500-2h4l-3 5 3 5h-4l-1.500-2-1.500 2h-4l3-5z" /></svg></button>
      </div>

      <div class="viewcube">
        <svg viewBox="0 0 134 134">
          <circle cx="67" cy="67" r="54" fill="none" stroke="#fafafa" stroke-width="13" />
          <rect x="41.500" y="41.500" width="51" height="51" fill="#ebebeb" stroke="#828282" />
          <rect x="51" y="51" width="32" height="32" fill="#dde1e5" />
          <text class="face" x="67" y="71">TOP</text>
          <text class="dir" x="67" y="18">N</text>
          <text class="dir" x="67" y="130">S</text>
          <text class="dir" x="11" y="74">W</text>
          <text class="dir" x="123" y="74">E</text>
        </svg>
        <button class="wcs">WCS<svg width="9" height="6" viewBox="0 0 9 6"><path d="M.5.5h8l-4 4z" fill="none" stroke="#a5a8ad" /></svg></button>
      </div>

      <div class="navbar">
        <svg viewBox="0 0 32 212">
          <circle cx="25" cy="5" r="4" fill="#dcdcdc" /><path d="M23 3l4 4M27 3l-4 4" stroke="#fff" />
          <path d="M16 19.500h10.500V30A10.500 10.500 0 1 1 16 19.500z" /><circle cx="16" cy="30" r="6" /><path d="M12 34l-4 4M20 34l4 4" />
          <path class="tick" d="M14 50h5l-2.500 3z" /><path d="M3 57.500h26" stroke="#cfcfcf" />
          <path d="M10 82l-6-9q2-2 4 0l3 3-1-12q2-2 3 0l1 6V63q2-2 3 0v7l1-7q2-2 3 0v8l2-6q2-1 2 1l-2 14-3 4h-8z" />
          <path d="M6 92l14 14M20 92L6 104" /><path class="tick" d="M4 90h5l-5 5zM20 90h-5l5 5zM4 106v-5l5 5z" /><circle cx="20" cy="105" r="5" fill="#fff" /><path d="M24 109l4 4" stroke-width="3" />
          <path class="tick" d="M14 120h5l-2.500 3z" />
          <ellipse cx="16" cy="141" rx="11" ry="4" /><path d="M14 149v-16h-3l4.500-5 4.500 5h-3v16z" fill="#f5f5f5" /><path class="tick" d="M8 143l4-4v8z" />
          <path class="tick" d="M14 158h5l-2.500 3z" /><path d="M3 165.500h26" stroke="#cfcfcf" />
          <path d="M4.500 170.500h6v6h-6zM12.500 170.500h6v6h-6zM20.500 170.500h6v6h-6zM4.500 179.500h16v13h-16z" /><path class="tick" d="M9 182l7 4-7 4z" />
          <circle cx="25" cy="206" r="4" fill="#dcdcdc" /><path d="M23 205.500h4M23 207.500h4" stroke="#fff" />
        </svg>
      </div>

      <div class="command-line">
        <div class="handle">
          <svg width="5" height="17" viewBox="0 0 5 17"><path d="M1 0v17M4 0v17" stroke="#fff" stroke-width="2" stroke-dasharray="2 1" /></svg>
          <button aria-label="Close command line"><svg width="9" height="9" viewBox="0 0 9 9"><path d="M0 0l9 9M9 0L0 9" stroke="#fff" stroke-width="2" /></svg></button>
          <button aria-label="Customize command line"><svg class="ico" viewBox="0 0 16 16"><path class="fl" d="M15 2l-3 3-2-1V2l3-2C9-1 7 2 8 5L0 13q-1 3 3 3l7-8c3 1 6-1 5-6z" /></svg></button>
        </div>
        <button class="recent" aria-label="Recent commands"><svg width="16" height="12" viewBox="0 0 16 12"><path d="M.5.5h15v11H.5z" fill="#f2f2f2" stroke="#777" /><path d="M0 0h16v3H0z" fill="#999" /><path d="M2.500 5l2 2-2 2M6 9.500h4" stroke="#777" fill="none" /></svg><i class="caret wide"></i></button>
        <input type="text" placeholder="Type a command" aria-label="Command" />
        <button class="history" aria-label="Command history"><i class="caret up"></i></button>
      </div>
    </div>

    <footer class="statusbar">
      <nav class="layout-tabs">
        <button class="hamburger" aria-label="Layout menu"><svg width="16" height="12"><use href="#menu" /></svg></button>
        <a class="current" href="#model">Model</a>
        <a href="#layout">ANSI C Layout</a>
        <span class="slash"></span>
        <button class="add" aria-label="New layout"><svg width="14" height="14"><use href="#plus" /></svg></button>
        <span class="slash"></span>
      </nav>
      <div class="status-tools">
        <div class="cluster"><button class="model">MODEL</button></div>
        <div class="cluster">
          <button aria-label="Grid"><svg class="ico" viewBox="0 0 16 16"><path class="sl" d="M4.500 0v16M8.500 0v16M12.500 0v16M0 4.500h16M0 8.500h16M0 12.500h16" /></svg></button>
          <button class="drop" aria-label="Snap"><svg class="ico" viewBox="0 0 16 16"><path d="M2 3h12M2 8h12M2 13h12" stroke="#dcdcdc" stroke-width="2" stroke-dasharray="2 3" /></svg><i class="caret wide"></i></button>
        </div>
        <div class="cluster">
          <button aria-label="Ortho"><svg class="ico" viewBox="0 0 16 16"><path class="sl" d="M.5 0v15.500H16M.5 10.500h5v5" /></svg></button>
          <button class="on" aria-label="Polar"><svg class="ico" viewBox="0 0 16 16"><path class="sw" d="M11 3a6.500 6.500 0 1 0 2.500 6M8 8.500h8M8 8.500L15 0M11.500 3v8" /></svg></button>
          <button class="narrow" aria-label="Polar settings"><i class="caret wide"></i></button>
          <button class="drop" aria-label="Isodraft"><svg class="ico" viewBox="0 0 16 16"><path d="M1 1l13 14" stroke="#e8685f" /><path d="M8.500 0v16" stroke="#4ccb7b" /><path class="fw" d="M7 7h3v3H7z" /></svg><i class="caret wide"></i></button>
        </div>
        <div class="cluster snug">
          <button aria-label="Object snap tracking"><svg class="ico" viewBox="0 0 16 16"><path class="sl" d="M15 2L1 14.500h15" /><path class="fl" d="M6 7h3v3H6z" /></svg></button>
          <button class="on" aria-label="Object snap"><svg class="ico" viewBox="0 0 16 16"><path class="sw" d="M.5.500h4v4h-4zM6 2.500h9.500v13h-13V6" /></svg></button>
          <button class="narrow" aria-label="Snap settings"><i class="caret wide"></i></button>
        </div>
        <div class="cluster scales">
          <button class="on" aria-label="Annotation visibility"><svg class="ico" viewBox="0 0 16 16"><use href="#annot" x="-1" width="14" height="16" /><circle class="sw" cx="13" cy="3.500" r="2" /></svg></button>
          <button aria-label="Auto scale"><svg class="ico" viewBox="0 0 16 16"><use href="#annot" x="-1" width="14" height="16" /><path class="fl" d="M13 0l-3 4h2l-1 4 4-5h-2z" /></svg></button>
          <button aria-label="Annotation scale"><svg class="ico" viewBox="0 0 16 16"><use href="#annot" x="1" width="14" height="16" /></svg></button>
          <button class="scale">1:1<i class="caret wide"></i></button>
        </div>
        <div class="cluster">
          <button class="drop" aria-label="Workspace"><svg class="ico" viewBox="0 0 16 16"><circle cx="8" cy="8" r="4" fill="none" stroke="#dcdcdc" stroke-width="3" /><path d="M8 1v3M8 12v3M1 8h3M12 8h3M3 3l2 2M11 11l2 2M3 13l2-2M11 5l2-2" stroke="#dcdcdc" stroke-width="3" /></svg><i class="caret wide"></i></button>
        </div>
        <div class="cluster snug single"><button aria-label="Annotation monitor"><svg class="ico" viewBox="0 0 16 16"><path class="fl" d="M7 0h2v7h7v2H9v7H7V9H0V7h7z" /></svg></button></div>
        <div class="cluster single"><button aria-label="Isolate objects"><svg class="ico" viewBox="0 0 16 16"><path class="sl" d="M.5.5h6v6h-6zM4 14.500h6L7 9.500z" /><circle class="sl" cx="13" cy="7" r="2.500" /></svg></button></div>
        <div class="cluster single">
          <button aria-label="Graphics"><svg class="ico" viewBox="0 0 16 16"><path fill="#2a6db5" d="M1 0h9l3 3v5H1z" /><path fill="#f4b63f" d="M1 8h8v7H1z" /><path class="sw" d="M6.500 2v9M2 6.500h10" /><path d="M8 12l3 3 5-6" fill="none" stroke="#4ccb7b" stroke-width="2" /></svg></button>
          <button class="pad" aria-label="Performance"><svg class="ico" viewBox="0 0 16 16"><path fill="#bfc2c6" d="M0 0h15v13H0z" /><path d="M1 8l4-5 3 7 4-7 2 4" fill="none" stroke="#2a6db5" /><path fill="#f0a06a" d="M11 7l5 9H6z" /><path class="sw" d="M11 10v3M11 14v1" /></svg></button>
        </div>
        <div class="cluster single"><button aria-label="Clean screen"><svg class="ico" viewBox="0 0 16 16"><path class="sl" d="M.5 2.500h15v11H.5zM9 7l4-3M3 12l3-3" /><path class="fl" d="M10 4h4v4zM2 9v3h4z" /></svg></button></div>
        <div class="cluster last"><button aria-label="Customization"><svg width="16" height="14" viewBox="0 0 16 14"><path class="fl" d="M0 0h16v2H0zM0 6h16v2H0zM0 12h16v2H0z" /></svg></button></div>
      </div>
    </footer>
    <div class="taskbar-edge"><span></span></div>
  </body>
</html>
```
FILE: styles.css
```
* {
  box-sizing: border-box;
}

html,
body {
  margin: 0;
  padding: 0;
  height: 100%;
}

body {
  display: flex;
  flex-direction: column;
  overflow: hidden;
  background: #222933;
  color: #f2f2f2;
  font-family: "Open Sans", "Noto Sans", sans-serif;
  font-size: 11px;
  line-height: 15px;
}

button,
input,
select {
  margin: 0;
  padding: 0;
  border: 0;
  background: none;
  color: inherit;
  font: inherit;
}

button {
  display: flex;
  align-items: center;
  white-space: nowrap;
}

a {
  color: inherit;
  text-decoration: none;
}

svg {
  display: block;
  flex: none;
  overflow: visible;
}

.defs {
  position: absolute;
  width: 0;
  height: 0;
}

.ico {
  width: 16px;
  height: 16px;
}

/* icon paints: f = fill, s = stroke */
.fl { fill: #dcdcdc; }
.fw { fill: #ffffff; }
.fb { fill: #79c1fa; }
.fy { fill: #fbd27b; }
.fr { fill: #ee5f63; }
.fc { fill: #6fd3dc; }
.fd { fill: #343c49; }
.sl { fill: none; stroke: #dcdcdc; }
.sw { fill: none; stroke: #ffffff; }
.sb { fill: none; stroke: #79c1fa; }
.sy { fill: none; stroke: #fbd27b; }

.caret {
  flex: none;
  width: 5px;
  height: 3px;
  background: #dcdcdc;
  clip-path: polygon(0 0, 100% 0, 50% 100%);
}

.caret.wide {
  width: 8px;
  height: 4px;
}

/* title bar */
.titlebar {
  display: flex;
  align-items: center;
  height: 28px;
  padding-bottom: 1px;
}

.quick-access {
  display: flex;
  align-items: center;
  gap: 8px;
  flex: 0 0 713px;
  padding-left: 15px;
}

.app-button {
  gap: 3px;
  margin-right: 2px;
}

.split {
  gap: 7px;
}

.off .caret {
  background: #8b9098;
}

.share {
  gap: 5px;
  color: #79c1fa;
}

.title {
  display: flex;
  gap: 16px;
}

.infocenter {
  display: flex;
  align-items: center;
  gap: 6px;
  margin-left: auto;
  margin-right: 65px;
}

.search {
  width: 177px;
  height: 20px;
  padding: 0 3px;
  background: #464f60;
  font-style: italic;
}

.search::placeholder {
  color: #b9bdc4;
}

.user {
  gap: 5px;
  width: 111px;
  margin-left: 2px;
}

.user .caret {
  margin-left: auto;
}

.cart {
  margin-left: 4px;
  margin-right: 2px;
}

.feedback {
  margin-left: 2px;
}

.divider {
  width: 1px;
  height: 18px;
  margin: 0 3px;
  background: #4b5363;
}

.window-buttons {
  display: flex;
}

.window-buttons button {
  justify-content: center;
  width: 46px;
  height: 28px;
}

/* ribbon tabs */
.ribbon-tabs {
  display: flex;
  align-items: center;
  gap: 1px;
  height: 24px;
  padding: 4px 0 0 4px;
}

.ribbon-tabs a {
  height: 20px;
  padding: 2px 10px 3px;
  color: #b4b8be;
}

.ribbon-tabs a.active {
  background: #3b4453;
  color: #f2f2f2;
}

.ribbon-tabs button {
  gap: 4px;
  margin-left: 21px;
}

/* ribbon */
.ribbon {
  display: grid;
  grid-template-columns: 225px 250px 189px 273px 201px 265px 69px 97px 91px 1fr;
  height: 99px;
  margin: 0 1px;
  background: #3b4453;
}

.panel {
  display: flex;
  flex-direction: column;
  margin: 1px 0;
  border-right: 1px solid #262d38;
}

.panel:last-child {
  border-right: 0;
}

.panel-body {
  display: grid;
  flex: 1;
  align-items: start;
  justify-content: start;
  padding-top: 4px;
}

.draw .panel-body { grid-template-columns: 43px 45px 53px 41px 34px; }
.modify .panel-body { grid-template-columns: 71px 70px 66px 33px; padding-left: 3px; }
.annotation .panel-body { grid-template-columns: 48px 57px 76px; }
.layers .panel-body { grid-template-columns: 62px 208px; }
.block .panel-body { grid-template-columns: 43px 33px 120px; }
.properties .panel-body { grid-template-columns: 64px 198px; }
.groups .panel-body { grid-template-columns: 42px 24px; }
.utilities .panel-body { grid-template-columns: 70px 24px; }
.clipboard .panel-body { grid-template-columns: 53px 34px; }
.view .panel-body { grid-template-columns: 62px; }

.big {
  flex-direction: column;
  padding-top: 2px;
  text-align: center;
}

.big svg {
  width: 32px;
  height: 32px;
  margin-bottom: 4px;
}

.big .caret {
  margin-top: 2px;
}

.stack {
  display: flex;
  flex-direction: column;
  gap: 2px;
}

.extra {
  margin-left: 9px;
}

.annotation .stack {
  margin-left: 4px;
}

.block .stack {
  margin-left: 5px;
}

.tool {
  gap: 5px;
  height: 22px;
  padding: 0 2px 0 4px;
}

.tool .caret {
  margin-left: auto;
}

.tool.pressed {
  padding: 0 0 0 3px;
  border: 1px solid #79c1fa;
  background: #455d79;
}

.row {
  display: flex;
}

.row .tool {
  min-width: 24px;
}

.combo {
  display: flex;
  align-items: center;
  gap: 6px;
  height: 22px;
  padding: 0 2px 0 6px;
  border: 1px solid #2a313c;
  background: #4c586c;
}

.combo select {
  flex: 1;
  height: 20px;
  appearance: none;
  outline: none;
}

.swatch {
  width: 14px;
  height: 14px;
  border: 1px solid #dcdcdc;
  background: #824141;
}

.prop-grid {
  display: grid;
  grid-template-columns: 16px 180px;
  gap: 2px;
  align-items: center;
}

.combo.color {
  gap: 5px;
}

.combo.color .swatch {
  width: 16px;
  height: 16px;
}

.combo.line {
  gap: 2px;
}

.rule {
  width: 64px;
  height: 1px;
  background: #ffffff;
}

.panel-title {
  display: flex;
  align-items: center;
  justify-content: center;
  height: 20px;
}

.panel-title button {
  gap: 6px;
}

.properties .panel-title button:first-child {
  margin: 0 auto;
}

.launch {
  margin-right: 5px;
}

.view .panel-title {
  justify-content: flex-start;
  gap: 8px;
  padding-left: 5px;
}

/* drawing and layout tabs */
.file-tabs,
.layout-tabs {
  display: flex;
  align-items: center;
}

.file-tabs {
  height: 31px;
  padding: 3px 0 0 16px;
  border-bottom: 4px solid #3b4453;
}

.hamburger {
  margin-right: 10px;
}

.slash {
  width: 7px;
  height: 16px;
  background: #4b5363;
  clip-path: polygon(calc(100% - 1px) 0, 100% 0, 1px 100%, 0 100%);
}

.file-tabs a:not(.current) {
  padding: 0 8px 2px 9px;
}

.current {
  display: flex;
  align-items: center;
  gap: 8px;
  height: 24px;
  background: #3b4453;
  clip-path: polygon(9px 0, 100% 0, calc(100% - 9px) 100%, 0 100%);
  font-weight: bold;
}

.file-tabs .current {
  width: 81px;
  padding: 0 0 2px 16px;
}

.add {
  margin: 0 10px;
}

/* drawing area */
.canvas {
  position: relative;
  flex: 1;
  min-height: 0;
  background: #ffffff;
  color: #000000;
}

.drawing {
  width: 100%;
  height: 100%;
  fill: none;
  stroke: #787878;
}

.boards {
  fill: #ffffff;
}

.ground {
  stroke: #8a4a4e;
}

.cursor {
  stroke: #000000;
}

.view-label {
  position: absolute;
  top: 6px;
  left: 4px;
}

.view-buttons {
  position: absolute;
  top: 8px;
  right: 9px;
  display: flex;
  gap: 6px;
}

.vb {
  fill: #f4f4f4;
  stroke: #696b70;
}

.viewcube {
  position: absolute;
  top: 39px;
  right: 16px;
  width: 134px;
  display: flex;
  flex-direction: column;
  align-items: center;
  gap: 20px;
}

.viewcube > svg {
  width: 134px;
  height: 134px;
}

.viewcube text {
  text-anchor: middle;
  font-family: "Liberation Sans", sans-serif;
  font-weight: bold;
}

.viewcube .face {
  fill: #8b8f93;
  font-family: "Open Sans", sans-serif;
  font-size: 12px;
}

.dir {
  fill: #e4e4e4;
  stroke: #a8a8a8;
  font-size: 20px;
}

.wcs {
  gap: 6px;
  width: 48px;
  height: 16px;
  padding-left: 5px;
  border-radius: 4px;
  background: #e8ebf4;
  color: #8b8f93;
  font-family: "Liberation Sans", sans-serif;
}

.navbar {
  position: absolute;
  top: 234px;
  right: 2px;
  width: 36px;
  height: 216px;
  border: 2px solid #c4c4c4;
  border-radius: 5px;
  background: #f5f5f5;
}

.navbar svg {
  width: 32px;
  height: 212px;
  fill: none;
  stroke: #d4d7d8;
}

.navbar .tick {
  fill: #cfd1d2;
  stroke: none;
}

.command-line {
  position: absolute;
  left: 143px;
  right: 142px;
  bottom: 0;
  display: flex;
  align-items: center;
  height: 27px;
  border: 1px solid #5c6370;
  border-radius: 3px;
  background: #ffffff;
}

.handle {
  display: flex;
  align-items: center;
  gap: 11px;
  width: 58px;
  height: 100%;
  padding-left: 3px;
  background: #6a6f7b;
}

.handle button:nth-child(2) {
  margin-left: -4px;
}

.recent {
  gap: 2px;
  margin-left: 3px;
}

.recent .caret,
.history .caret {
  background: #85888e;
}

.command-line input {
  flex: 1;
  padding-left: 7px;
  outline: none;
  font: italic 12px "DejaVu Sans Mono", monospace;
}

.command-line input::placeholder {
  color: #989898;
}

.history {
  margin-right: 3px;
}

.caret.up {
  width: 6px;
  height: 4px;
  clip-path: polygon(50% 0, 100% 100%, 0 100%);
}

/* status bar */
.statusbar {
  display: flex;
  justify-content: space-between;
  height: 33px;
  border-top: 4px solid #3b4453;
}

.layout-tabs {
  height: 24px;
  padding-left: 16px;
}

.layout-tabs .hamburger {
  margin-right: 9px;
}

.layout-tabs .current {
  justify-content: center;
  width: 69px;
}

.layout-tabs a:not(.current) {
  padding: 0 12px 0 7px;
}

.status-tools {
  display: flex;
  gap: 3px;
  padding: 2px 2px 3px 0;
}

.cluster {
  display: flex;
  background: #3b4453;
}

.cluster.snug {
  margin-left: -2px;
}

.cluster button {
  justify-content: center;
  width: 25px;
}

.cluster.single button {
  width: 24px;
}

.cluster.last button {
  width: 23px;
}

.cluster .model {
  width: 47px;
  font-size: 12px;
}

.cluster .drop {
  gap: 5px;
  width: 39px;
}

.cluster .narrow {
  width: 17px;
}

.cluster .on {
  width: 22px;
  background: #608fc2;
}

.scales {
  padding-left: 1px;
}

.cluster .scale {
  gap: 4px;
  width: 34px;
}

.cluster.single .pad {
  width: 33px;
}

.taskbar-edge {
  display: flex;
  justify-content: center;
  height: 2px;
  background: #1c1c1c;
}

.taskbar-edge span {
  width: 50px;
  margin-right: 104px;
  border-top: 1px solid #5a5a5a;
}
```
